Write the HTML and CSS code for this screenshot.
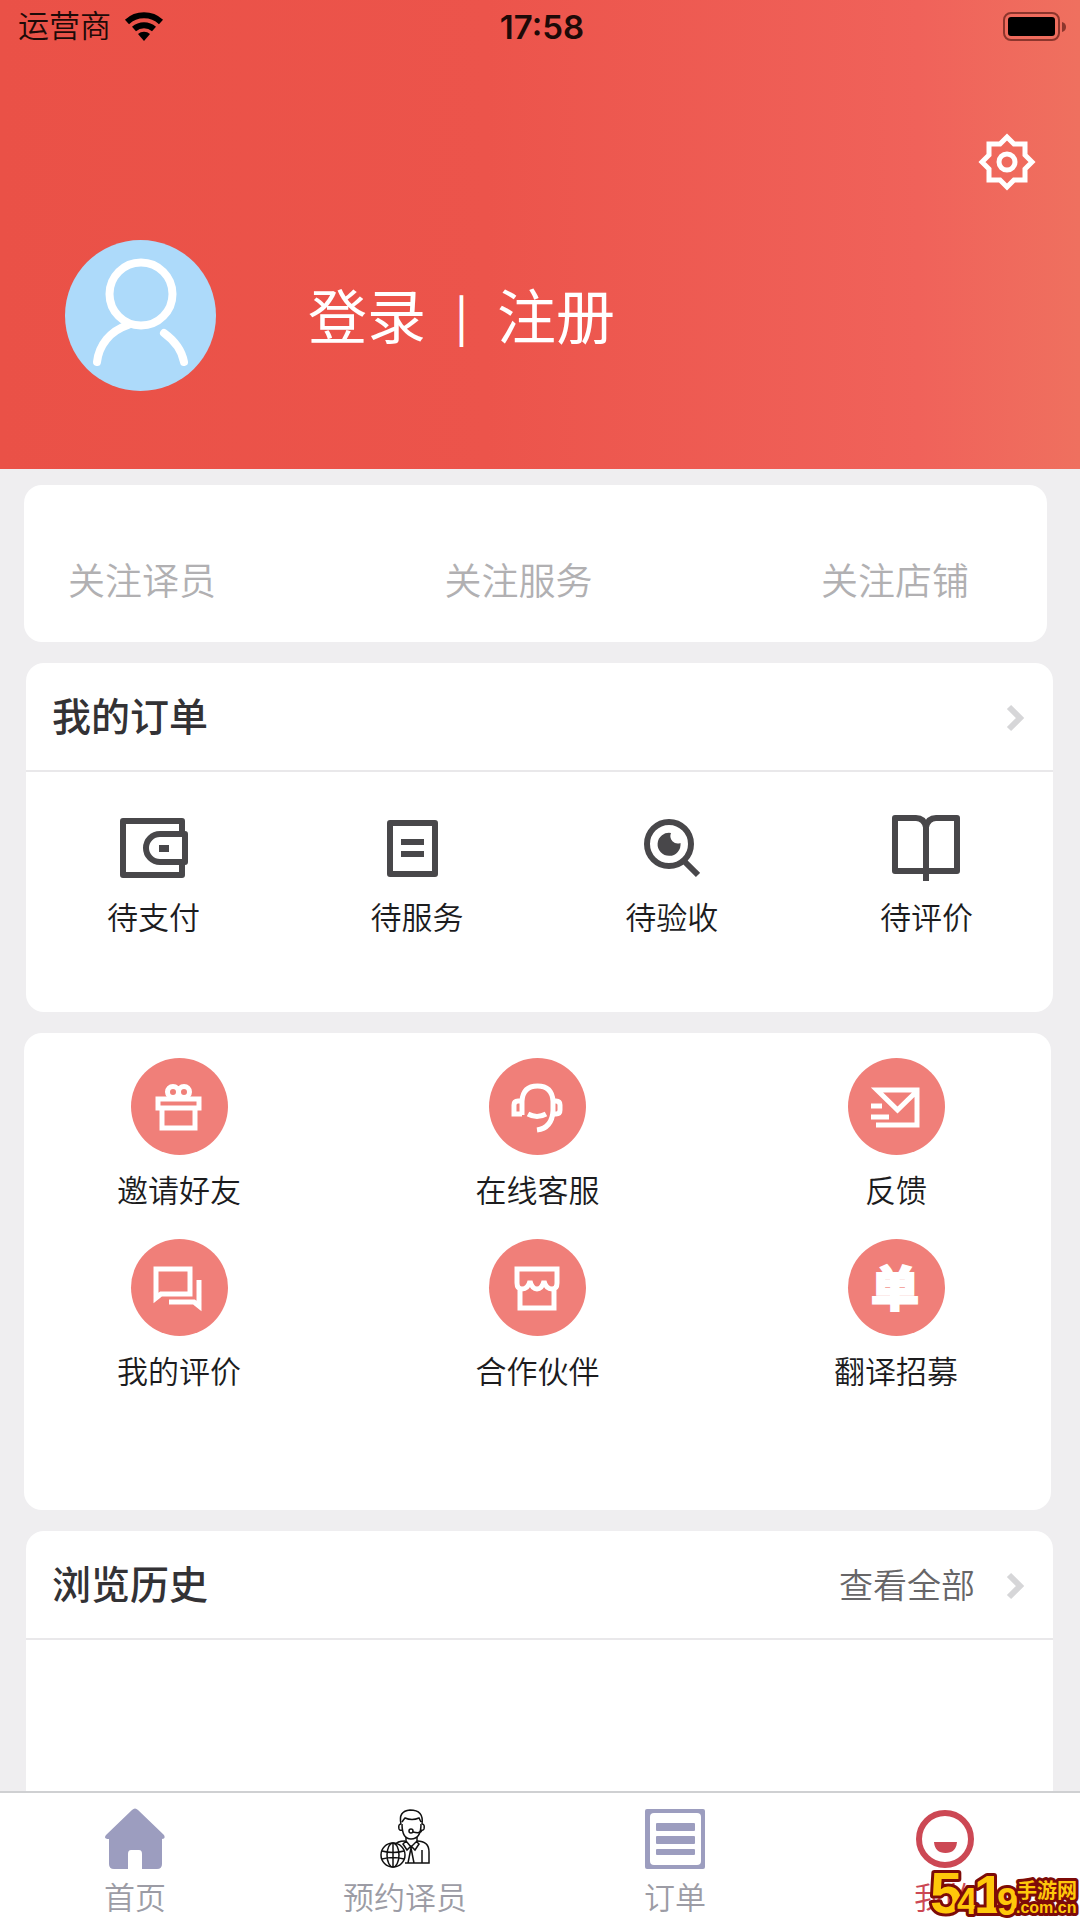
FILE: index.html
```html
<!DOCTYPE html>
<html lang="zh-CN">
  <head>
    <meta charset="utf-8">
    <meta name="viewport" content="width=device-width, initial-scale=1">
    <title>我的</title>
    <link rel="stylesheet" href="styles.css">
  </head>
  <body>
    <!-- 顶部 -->
    <header class="header">
      <div class="status">
        <div class="carrier">
          <span>运营商</span>
          <svg width="40" height="30" viewBox="0 0 40 30">
            <path d="M20 29l-6-7a9 9 0 0 1 12 0z"/>
            <path d="M10 17a15 15 0 0 1 20 0" fill="none" stroke="#000" stroke-width="6"/>
            <path d="M3 10a25 25 0 0 1 34 0" fill="none" stroke="#000" stroke-width="6"/>
          </svg>
        </div>
        <span class="time">17:58</span>
        <svg class="battery" width="63" height="30" viewBox="0 0 63 30">
          <rect x="1" y="1" width="55" height="27" rx="7" fill="none" stroke="#8c352c" stroke-width="2"/>
          <rect x="5" y="5" width="47" height="19" rx="3"/>
          <path d="M59 10q4 1 4 5t-4 5z" fill="#8c352c"/>
        </svg>
      </div>

      <div class="tools">
        <a href="#" class="settings" aria-label="设置">
          <svg width="58" height="58" viewBox="0 0 58 58" fill="none" stroke="#fff" stroke-width="5">
            <path d="M29 4l7 7h11v11l7 7-7 7v11H36l-7 7-7-7H11V36l-7-7 7-7V11h11z"/>
            <circle cx="29" cy="29" r="8"/>
          </svg>
        </a>
      </div>

      <div class="profile">
        <svg class="avatar" viewBox="0 0 151 151" fill="none" stroke="#fff" stroke-width="8" stroke-linecap="round">
          <circle cx="75.5" cy="75.5" r="75.5" fill="#addafa" stroke="none"/>
          <circle cx="76" cy="54" r="31.5"/>
          <path d="M63 85C45 91 34 105 32 122M99 93c11 8 18 18 20 29"/>
        </svg>
        <div class="login">
          <a href="#">登录</a>
          <span class="split">|</span>
          <a href="#">注册</a>
        </div>
      </div>
    </header>

    <main class="main">
      <!-- 关注 -->
      <nav class="card follow">
        <a href="#">关注译员</a>
        <a href="#">关注服务</a>
        <a href="#">关注店铺</a>
      </nav>

      <!-- 我的订单 -->
      <section class="card orders">
        <a href="#" class="card-head">
          <h2>我的订单</h2>
          <svg class="arrow" viewBox="0 0 20 28"><path d="M4 3l11 11L4 25"/></svg>
        </a>
        <div class="order-list">
          <a href="#">
            <svg width="68" height="66" viewBox="0 -3 68 66" class="line-icon">
              <path d="M62 15V3H3v54h59V46"/>
              <path d="M65 16H40a14 14 0 0 0 0 28h25z"/>
              <path d="M39 30.500h10" stroke-width="7"/>
            </svg>
            <span>待支付</span>
          </a>
          <a href="#">
            <svg width="52" height="66" viewBox="0 -5 52 66" class="line-icon">
              <path d="M3 3h45v51H3zM14 22h23M14 34h23"/>
            </svg>
            <span>&nbsp;待服务</span>
          </a>
          <a href="#">
            <svg width="56" height="66" viewBox="0 -4 56 66" class="line-icon">
              <circle cx="25" cy="25" r="22"/>
              <path d="M40 42l14 14"/>
              <path d="M27 14a11.500 11.500 0 1 0 9.500 10a7.500 7.500 0 0 1-9.500-10z" fill="#48474a" stroke="none"/>
            </svg>
            <span>待验收</span>
          </a>
          <a href="#">
            <svg width="68" height="66" viewBox="0 0 68 66" class="line-icon">
              <path d="M34 12q-2-9-10-9H3v53h62V3H44q-8 0-10 9v54"/>
            </svg>
            <span>待评价</span>
          </a>
        </div>
      </section>

      <!-- 功能入口 -->
      <nav class="card services">
        <a href="#">
          <svg class="round" viewBox="0 0 97 97">
            <path d="M27 41h41v9H27zM31 50v20h33V50"/>
            <circle cx="42" cy="34" r="5.500"/>
            <circle cx="53" cy="34" r="5.500"/>
          </svg>
          <span>邀请好友</span>
        </a>
        <a href="#">
          <svg class="round" viewBox="0 0 97 97">
            <path d="M33 57V43q1-15 15.500-15T64 43v10q-1 17-16 19"/>
            <path d="M33 43h-4q-4 0-4 4v9h8M64 43h3q4 0 4 4v5q0 4-4 4h-3M39 56q9 5 18 0"/>
          </svg>
          <span>在线客服</span>
        </a>
        <a href="#">
          <svg class="round" viewBox="0 0 97 97">
            <path d="M28 67h41V32H29l20.500 20L69 33M23 48h11M23 59h18"/>
          </svg>
          <span>反馈</span>
        </a>
        <a href="#">
          <svg class="round" viewBox="0 0 97 97">
            <path d="M25 59V30h34v25H30zM68 41v26l-5-4H38"/>
          </svg>
          <span>我的评价</span>
        </a>
        <a href="#">
          <svg class="round" viewBox="0 0 97 97">
            <path d="M28 30h40v14q0 6-5 6-6 0-8-8-2 8-7 8t-7-8q-2 8-8 8-5 0-5-6zM31 50v19h34V50"/>
          </svg>
          <span>合作伙伴</span>
        </a>
        <a href="#">
          <svg class="round" viewBox="0 0 97 97">
            <text x="47" y="67" class="dan">单</text>
          </svg>
          <span>翻译招募</span>
        </a>
      </nav>

      <!-- 浏览历史 -->
      <section class="card history">
        <a href="#" class="card-head">
          <h2>浏览历史</h2>
          <span class="more">查看全部</span>
          <svg class="arrow" viewBox="0 0 20 28"><path d="M4 3l11 11L4 25"/></svg>
        </a>
      </section>
    </main>

    <!-- 底部导航 -->
    <nav class="tabbar">
      <a href="#">
        <svg width="60" height="61" viewBox="0 0 60 61" fill="#9c9dbf">
          <path d="M27 2q3-3 6 0l26 25q2 4-2 4v25q0 5-5 5H37V46q0-4-3-4h-8q-3 0-3 4v15H9q-5 0-5-5V31q-6 0-3-4z"/>
        </svg>
        <span>首页</span>
      </a>
      <a href="#">
        <svg width="50" height="61" viewBox="0 -2 50 61" fill="none" stroke="#111" stroke-width="1.500">
          <path d="M21 14q-3-13 9-14 14 0 12 14M22 14q0 15 9 15 10 0 10-15M22 12q2-3 3-4 7 3 14 0l2 4"/>
          <path d="M21 14q-3 0-2 5 1 2 3 1M42 14q3 0 2 5-1 2-3 1M42 20q-1 4-9 2"/>
          <circle cx="31" cy="21" r="2"/>
          <path d="M26 27v4l5 6 6-6v-4M26 31l-3 3 4 6 4-4 4 4 4-6-3-3"/>
          <path d="M25 31q-8 0-10 4M37 31q12 0 12 11v11H25M42 40v13M31 38l-3 15M31 38l3 15"/>
          <circle cx="13" cy="45" r="12"/>
          <path d="M13 33v24M2 41q11 3 22 0M2 49q11-3 22 0"/>
          <ellipse cx="13" cy="45" rx="6" ry="12"/>
        </svg>
        <span>预约译员</span>
      </a>
      <a href="#">
        <svg width="60" height="61" viewBox="0 0 60 61" fill="#9c9dbf">
          <rect y="1" width="60" height="60" rx="2"/>
          <rect x="5" y="5" width="51" height="52" rx="4" fill="#fff"/>
          <rect x="11" y="15" width="39" height="8" rx="1"/>
          <rect x="11" y="28" width="39" height="8" rx="1"/>
          <rect x="11" y="41" width="39" height="6" rx="1"/>
        </svg>
        <span>订单</span>
      </a>
      <a href="#" class="active">
        <svg width="58" height="61" viewBox="0 -2 58 61" fill="#cc4854">
          <circle cx="29" cy="29" r="26" fill="none" stroke="#cc4854" stroke-width="6"/>
          <path d="M18 32h23q-1 11-11.500 11T18 32z"/>
        </svg>
        <span>我的</span>
      </a>
    </nav>

    <!-- 水印 -->
    <svg class="mark" width="152" height="56" viewBox="0 0 152 56">
      <text x="2" y="49" font-size="58">5</text>
      <text x="29" y="50" font-size="36">4</text>
      <text x="46" y="49" font-size="54">1</text>
      <text x="69" y="51" font-size="38">9</text>
      <text x="89" y="34" font-size="20">手游网</text>
      <text x="88" y="49" font-size="16">.com.cn</text>
    </svg>
  </body>
</html>
```
FILE: styles.css
```css
* {
  box-sizing: border-box;
}

body {
  margin: 0;
  min-height: 100vh;
  display: flex;
  flex-direction: column;
  position: relative;
  background-color: #efeef0;
  color: #1c1c1e;
  font-family: "Liberation Sans", "Noto Sans CJK SC", sans-serif;
  font-size: 31px;
  font-weight: 350;
  line-height: 42px;
}

a {
  color: inherit;
  text-decoration: none;
}

svg {
  display: block;
}

/* 顶部 */
.header {
  height: 469px;
  background: linear-gradient(to right, #ea5147, #ec544b 45%, #f0625a 85%, #ef705f);
}

.status {
  height: 54px;
  padding: 0 14px 0 18px;
  display: grid;
  grid-template-columns: 1fr auto 1fr;
  align-items: center;
  color: #1d0a08;
}

.carrier {
  display: flex;
  align-items: center;
  gap: 13px;
}

.time {
  font-family: Inter, sans-serif;
  font-size: 33px;
  font-weight: 600;
}

.battery {
  justify-self: end;
}

.tools {
  display: flex;
  justify-content: flex-end;
  padding: 79px 44px 49px;
}

.profile {
  display: flex;
  align-items: center;
  gap: 92px;
  padding-left: 65px;
}

.avatar {
  width: 151px;
  height: 151px;
}

.login {
  display: flex;
  align-items: center;
  gap: 29px;
  padding-bottom: 4px;
  color: #fff;
  font-family: "Noto Sans CJK SC", sans-serif;
  font-size: 59px;
  font-weight: 400;
  line-height: 80px;
}

.split {
  font-size: 46px;
  font-weight: 500;
}

/* 卡片 */
.main {
  flex: 1;
  display: flex;
  flex-direction: column;
  gap: 21px;
  padding: 16px 27px 0 26px;
}

.card {
  background-color: #fff;
  border-radius: 18px;
}

.follow {
  height: 157px;
  margin: 0 6px 0 -2px;
  padding: 38px 78px 0 44px;
  display: flex;
  justify-content: space-between;
  align-items: center;
  color: #b1b0b2;
  font-size: 37px;
}

.card-head {
  height: 109px;
  padding: 2px 28px 0 26px;
  display: flex;
  align-items: center;
  border-bottom: 2px solid #e9e8ea;
}

.card-head h2 {
  flex: 1;
  margin: 0;
  color: #333235;
  font-size: 39px;
  font-weight: 500;
}

.more {
  margin-right: 30px;
  color: #676668;
  font-size: 34px;
}

.arrow {
  width: 20px;
  height: 28px;
  fill: none;
  stroke: #d6d6d8;
  stroke-width: 6;
}

.order-list {
  display: flex;
  justify-content: space-between;
  padding: 43px 80px 72px 81px;
}

.order-list a,
.services a,
.tabbar a {
  display: flex;
  flex-direction: column;
  align-items: center;
}

.order-list a {
  gap: 17px;
}

.line-icon {
  fill: none;
  stroke: #48474a;
  stroke-width: 6;
  stroke-linejoin: round;
}

.services {
  margin: 0 2px 0 -2px;
  padding: 25px 93px 116px;
  display: grid;
  grid-template-columns: auto auto auto;
  justify-content: space-between;
  row-gap: 26px;
}

.services a {
  gap: 16px;
}

.round {
  width: 97px;
  height: 97px;
  border-radius: 50%;
  background-color: #f07f79;
  fill: none;
  stroke: #fff;
  stroke-width: 5;
}

.dan {
  fill: #fff;
  stroke-width: 2;
  font-family: "Noto Sans CJK SC", sans-serif;
  font-size: 48px;
  font-weight: 900;
  text-anchor: middle;
}

.history {
  flex: 1;
  border-radius: 18px 18px 0 0;
}

/* 底部导航 */
.tabbar {
  height: 129px;
  padding-top: 15px;
  display: grid;
  grid-template-columns: repeat(4, 1fr);
  background-color: #fff;
  border-top: 2px solid #cfd0d2;
  color: #9c9ca5;
}

.tabbar a {
  gap: 9px;
}

.tabbar .active {
  color: #cc4854;
}

/* 水印 */
.mark {
  position: absolute;
  right: 0;
  bottom: 0;
  fill: #ffc80a;
  stroke: #7d0b08;
  stroke-width: 6;
  stroke-linejoin: round;
  paint-order: stroke;
  font-family: "Liberation Sans", "Noto Sans CJK SC", sans-serif;
  font-weight: 700;
}
```
